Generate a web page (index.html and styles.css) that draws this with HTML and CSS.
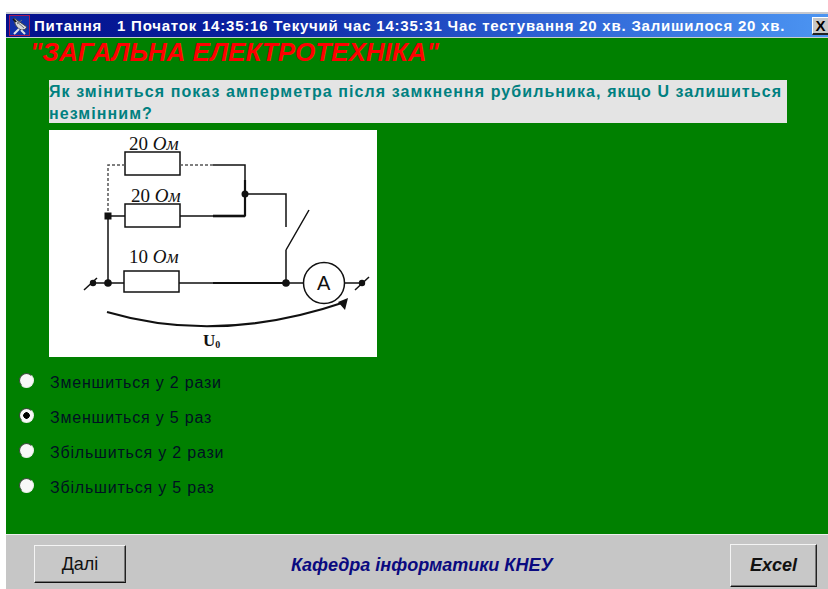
FILE: index.html
```html
<!DOCTYPE html>
<html lang="uk">
<head>
<meta charset="utf-8">
<title>Питання</title>
<link rel="stylesheet" href="styles.css">
</head>
<body>
<div class="window">
  <header class="titlebar">
    <svg class="app-icon" width="21" height="21" viewBox="0 0 21 21">
      <rect x="0.5" y="0.5" width="20" height="20" fill="#1030a8" stroke="#a01858"/>
      <path d="M5 3 L18 12 Q16 16 11 14.5 Q5 11 5 3Z" fill="#d4d8dc" stroke="#40444c" stroke-width="1"/>
      <path d="M6 5 L15 13 M8 9 L13 5" stroke="#6a7078" stroke-width="1"/>
      <path d="M4 4 L7 7" stroke="#111" stroke-width="1.6"/>
      <path d="M10 14 L5 19 M12 15 L16 19" stroke="#dfe2e6" stroke-width="2"/>
    </svg>
    <span class="title-text">Питання&nbsp;&nbsp; 1 Початок 14:35:16 Текучий час 14:35:31 Час тестування 20 хв. Залишилося 20 хв.</span>
    <button class="close" type="button">X</button>
  </header>
  <main class="content">
    <h1 class="heading">"ЗАГАЛЬНА ЕЛЕКТРОТЕХНІКА"</h1>
    <p class="question">Як зміниться показ амперметра після замкнення рубильника, якщо U залишиться незмінним?</p>
    <svg class="diagram" width="328" height="227" viewBox="0 0 328 227">
      <rect width="328" height="227" fill="#fff"/>
      <g fill="none" stroke="#111" stroke-width="1.5">
        <rect x="76" y="22" width="55" height="23"/>
        <rect x="76" y="74" width="55" height="23"/>
        <rect x="75" y="141" width="55" height="21"/>
        <path d="M59 153 V86 M59 86 H76 M131 86 H196 V35 H164 M196 64 H237 V97 M237 120 L260 80 M237 120 V153"/>
        <path d="M44 153 H75 M130 153 H254 M296 153 H313"/>
        <path d="M196 86 H164" stroke-width="2.6"/>
        <path d="M164 153 H237" stroke-width="2.2"/>
        <path d="M196 50 V86" stroke-width="2.2"/>
        <path d="M131 35 H164 M59 86 V35 H76" stroke-dasharray="3 2" stroke="#555"/>
        <circle cx="275" cy="153" r="20.5" fill="#fff"/>
        <path d="M35 160 L48 148"/>
        <path d="M306 160 L320 147"/>
        <path d="M58 182 Q170 215 296 172" stroke-width="2"/>
      </g>
      <g fill="#111">
        <circle cx="196" cy="64" r="3.5"/>
        <rect x="55.500" y="82.500" width="7" height="7"/>
        <circle cx="59" cy="153" r="3.8"/>
        <circle cx="237" cy="153" r="3.8"/>
        <circle cx="44" cy="153" r="3.2"/>
        <circle cx="313" cy="153" r="3.2"/>
        <path d="M299 168 L289 172 L296 180Z"/>
      </g>
      <text class="dia-label" x="80" y="20">20 <tspan class="dia-unit">Ом</tspan></text>
      <text class="dia-label" x="82" y="72">20 <tspan class="dia-unit">Ом</tspan></text>
      <text class="dia-label" x="80" y="133">10 <tspan class="dia-unit">Ом</tspan></text>
      <text class="dia-a" x="268" y="160">A</text>
      <text class="dia-u" x="154" y="216">U<tspan class="dia-sub" dy="2">0</tspan></text>
    </svg>
    <ul class="answers">
      <li class="answer"><span class="radio"></span>Зменшиться у 2 рази</li>
      <li class="answer"><span class="radio radio-on"></span>Зменшиться у 5 раз</li>
      <li class="answer"><span class="radio"></span>Збільшиться у 2 рази</li>
      <li class="answer"><span class="radio"></span>Збільшиться у 5 раз</li>
    </ul>
  </main>
  <footer class="footer">
    <button class="btn btn-next" type="button">Далі</button>
    <span class="dept">Кафедра інформатики КНЕУ</span>
    <button class="btn btn-excel" type="button">Excel</button>
  </footer>
</div>
</body>
</html>
```
FILE: styles.css
```css
* { box-sizing: border-box; }

html, body { height: 100%; }

body {
  margin: 0;
  padding: 12px 0 0 6px;
  background: #fff;
  font-family: "Liberation Sans", Arial, sans-serif;
  overflow: hidden;
}

.window {
  display: flex;
  flex-direction: column;
  height: 577px;
}

.titlebar {
  display: flex;
  align-items: center;
  height: 26px;
  flex: none;
  padding-left: 3px;
  border-top: 2px solid #c4c8d0;
  border-bottom: 1px solid #c8ccd0;
  background: linear-gradient(90deg, #04108c 0%, #0a22a0 30%, #2a5cd0 62%, #4c95f2 100%);
}

.app-icon { flex: none; }

.title-text {
  margin-left: 4px;
  color: #fff;
  font-size: 15px;
  font-weight: bold;
  letter-spacing: 0.79px;
  white-space: nowrap;
}

.close {
  display: flex;
  align-items: center;
  justify-content: center;
  margin-left: auto;
  width: 16px;
  height: 18px;
  padding: 0;
  border: none;
  border-top: 1px solid #fff;
  border-left: 1px solid #fff;
  border-bottom: 2px solid #222;
  background: #c6c6c6;
  color: #000;
  font: bold 15px/15px "Liberation Sans", sans-serif;
}

.content {
  flex: 1;
  display: flex;
  flex-direction: column;
  align-items: flex-start;
  background: #008000;
}

.heading {
  margin: 1px 0 0 24px;
  color: #f00;
  font-size: 26px;
  line-height: 27px;
  font-style: italic;
  font-weight: bold;
  letter-spacing: 0;
}

.question {
  width: 738px;
  height: 43px;
  margin: 14px 0 0 43px;
  padding: 1px 0 0 0;
  background: #e4e4e4;
  color: #008080;
  font-size: 16px;
  line-height: 22px;
  font-weight: bold;
  letter-spacing: 1.08px;
}

.diagram {
  display: block;
  margin: 7px 0 0 43px;
}

.dia-label { font: 19px "Liberation Serif", serif; fill: #111; }
.dia-unit { font-style: italic; }
.dia-a { font: 20px "Liberation Sans", sans-serif; fill: #111; }
.dia-u { font: bold 17px "Liberation Serif", serif; fill: #111; }
.dia-sub { font-size: 10px; }

.answers {
  list-style: none;
  margin: 8px 0 0 0;
  padding: 0;
}

.answer {
  display: flex;
  align-items: center;
  height: 35px;
  padding-left: 13px;
  color: #012;
  font-size: 16px;
  letter-spacing: 0.8px;
  white-space: nowrap;
}

.radio {
  flex: none;
  width: 15px;
  height: 15px;
  margin-right: 16px;
  border-radius: 50%;
  background: #f8f8f8;
  border: 1.5px solid;
  border-color: #3c4a3c #e8efe8 #e8efe8 #3c4a3c;
  position: relative;
  top: -2px;
}

.radio-on {
  background: radial-gradient(circle, #000 0 3px, #f8f8f8 3.5px);
}

.footer {
  flex: none;
  display: flex;
  align-items: center;
  height: 55px;
  padding: 0 11px 0 28px;
  border-top: 1px solid #eef0ee;
  background: #c6c6c6;
}

.btn {
  padding: 0;
  background: #c8c8c8;
  border: 1px solid;
  border-color: #f4f4f4 #222 #111 #f4f4f4;
  box-shadow: inset -1px -1px 0 #777;
  font-family: "Liberation Sans", Arial, sans-serif;
  color: #111;
}

.btn-next {
  width: 92px;
  height: 38px;
  margin-top: 4px;
  font-size: 18px;
}

.dept {
  margin: 6px 0 0 165px;
  color: #0a0a80;
  font-size: 18px;
  font-weight: bold;
  font-style: italic;
  white-space: nowrap;
}

.btn-excel {
  width: 87px;
  height: 43px;
  margin-left: auto;
  margin-top: 7px;
  font-size: 18px;
  font-style: italic;
  font-weight: bold;
}
```
